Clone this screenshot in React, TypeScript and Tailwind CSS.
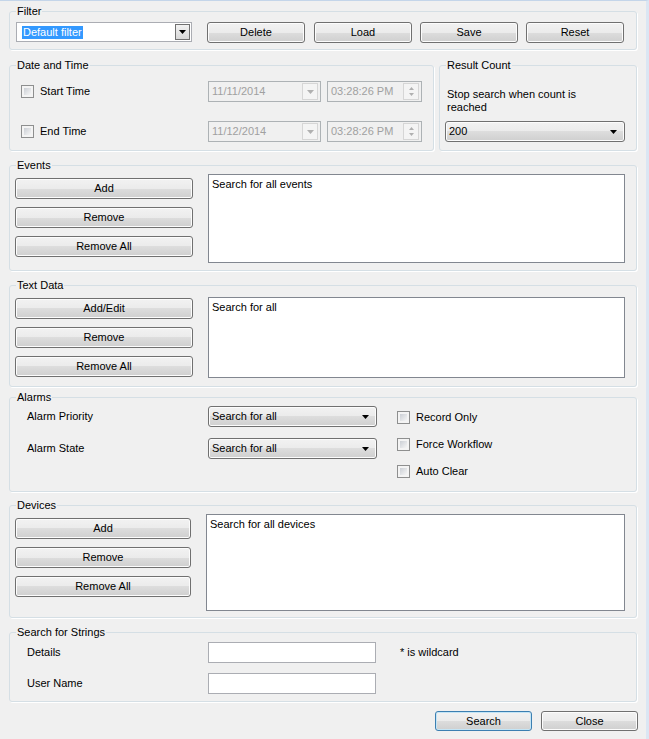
import React from "react";

const btnBase =
  "flex items-center justify-center rounded-[3px] border bg-[linear-gradient(#f2f2f2_0%,#ebebeb_50%,#dddddd_50%,#cfcfcf_100%)] text-[11px] leading-[13px] text-black";

function Btn({ label, className = "", focused = false }: { label: string; className?: string; focused?: boolean }) {
  return (
    <button
      type="button"
      className={`${btnBase} ${
        focused
          ? "border-[#3c7fb1] shadow-[inset_0_0_0_1px_#c4e5f6]"
          : "border-[#707070] shadow-[inset_0_0_0_1px_#fcfcfc]"
      } ${className}`}
    >
      {label}
    </button>
  );
}

function Arrow({ color = "#000000" }: { color?: string }) {
  return (
    <svg width="7" height="4" viewBox="0 0 7 4">
      <path d="M0 0h7L3.5 4z" fill={color} />
    </svg>
  );
}

function Check({ label }: { label: string }) {
  return (
    <div className="flex h-[13px] items-center">
      <div className="h-[13px] w-[13px] border border-[#8e8f8f] bg-[#f4f4f4] p-[2px]">
        <div className="h-full w-full bg-[linear-gradient(135deg,#cbcfd5,#f6f6f6)]" />
      </div>
      <span className="ml-[6px]">{label}</span>
    </div>
  );
}

function Group({ title, className = "", children }: { title: string; className?: string; children?: React.ReactNode }) {
  return (
    <div className={`relative rounded-[3px] border border-[#d5dfe5] shadow-[1px_1px_0_#ffffff] ${className}`}>
      <span className="absolute -top-[7px] left-[6px] bg-[#f0f0f0] px-[1px] leading-[13px]">{title}</span>
      {children}
    </div>
  );
}

function DropList({ value, className = "" }: { value: string; className?: string }) {
  return (
    <div
      className={`flex items-center justify-between rounded-[3px] border border-[#707070] bg-[linear-gradient(#f2f2f2_0%,#ebebeb_50%,#dddddd_50%,#cfcfcf_100%)] pl-[3px] pr-[7px] shadow-[inset_0_0_0_1px_#fcfcfc] ${className}`}
    >
      <span>{value}</span>
      <Arrow />
    </div>
  );
}

function ListBox({ text, className = "" }: { text: string; className?: string }) {
  return <div className={`border border-[#828790] bg-white pl-[3px] pt-[3px] ${className}`}>{text}</div>;
}

function DisabledPicker({ value, spin = false, className = "" }: { value: string; spin?: boolean; className?: string }) {
  return (
    <div className={`flex h-[21px] items-center justify-between border border-[#adb2b5] bg-[#f0f0f0] pl-[3px] pr-[2px] text-[#a0a0a0] ${className}`}>
      <span>{value}</span>
      {spin ? (
        <div className="flex h-[17px] w-[16px] flex-col items-center justify-center gap-[3px] border border-[#d6d6d6] bg-[#f4f4f4]">
          <svg width="5" height="3" viewBox="0 0 5 3">
            <path d="M0 3h5L2.5 0z" fill="#b0b0b0" />
          </svg>
          <svg width="5" height="3" viewBox="0 0 5 3">
            <path d="M0 0h5L2.5 3z" fill="#b0b0b0" />
          </svg>
        </div>
      ) : (
        <div className="flex h-[17px] w-[16px] items-center justify-center border border-[#d6d6d6] bg-[#f4f4f4]">
          <Arrow color="#b0b0b0" />
        </div>
      )}
    </div>
  );
}

function ButtonStack({ labels, width }: { labels: string[]; width: string }) {
  return (
    <div className={`flex flex-col gap-[8px] pt-[12px] ${width}`}>
      {labels.map((l) => (
        <Btn key={l} label={l} className="h-[21px] w-full" />
      ))}
    </div>
  );
}

export default function App() {
  return (
    <div className="h-[739px] w-[649px] overflow-hidden border-t border-r-[3px] border-t-[#c4d5e9] border-r-[#dbe6f3] bg-[#f0f0f0] pl-[9px] font-['Liberation_Sans',Arial,sans-serif] text-[11px] leading-[13px] text-black">
      {/* Filter */}
      <Group title="Filter" className="mt-[10px] h-[39px] w-[628px]">
        <div className="flex items-start pl-[6px] pt-[10px]">
          <div className="flex h-[20px] w-[176px] items-center justify-between border border-[#abadb3] bg-white pl-[5px] pr-[1px]">
            <span className="bg-[#3399ff] px-[1px] text-white">Default filter</span>
            <div className="flex h-[16px] w-[15px] items-center justify-center border border-[#707070] bg-[linear-gradient(#f2f2f2,#d8d8d8)]">
              <Arrow />
            </div>
          </div>
          <Btn label="Delete" className="ml-[15px] h-[21px] w-[98px]" />
          <Btn label="Load" className="ml-[9px] h-[21px] w-[98px]" />
          <Btn label="Save" className="ml-[8px] h-[21px] w-[98px]" />
          <Btn label="Reset" className="ml-[8px] h-[21px] w-[98px]" />
        </div>
      </Group>

      {/* Date and Time + Result Count */}
      <div className="mt-[15px] flex">
        <Group title="Date and Time" className="h-[86px] w-[425px]">
          <div className="flex flex-col gap-[19px] pl-[11px] pt-[15px]">
            <div className="flex h-[21px] items-center">
              <div className="w-[187px]">
                <Check label="Start Time" />
              </div>
              <DisabledPicker value="11/11/2014" className="w-[113px]" />
              <DisabledPicker value="03:28:26 PM" spin className="ml-[6px] w-[95px]" />
            </div>
            <div className="flex h-[21px] items-center">
              <div className="w-[187px]">
                <Check label="End Time" />
              </div>
              <DisabledPicker value="11/12/2014" className="w-[113px]" />
              <DisabledPicker value="03:28:26 PM" spin className="ml-[6px] w-[95px]" />
            </div>
          </div>
        </Group>
        <Group title="Result Count" className="ml-[5px] h-[86px] w-[198px]">
          <div className="pl-[5px] pt-[22px]">
            <p className="ml-[2px] w-[150px]">Stop search when count is reached</p>
            <DropList value="200" className="mt-[7px] h-[21px] w-[180px]" />
          </div>
        </Group>
      </div>

      {/* Events */}
      <Group title="Events" className="mt-[14px] h-[106px] w-[628px]">
        <div className="flex items-start pl-[5px]">
          <ButtonStack labels={["Add", "Remove", "Remove All"]} width="w-[178px]" />
          <ListBox text="Search for all events" className="ml-[15px] mt-[8px] h-[89px] w-[417px]" />
        </div>
      </Group>

      {/* Text Data */}
      <Group title="Text Data" className="mt-[14px] h-[102px] w-[628px]">
        <div className="flex items-start pl-[5px]">
          <ButtonStack labels={["Add/Edit", "Remove", "Remove All"]} width="w-[178px]" />
          <ListBox text="Search for all" className="ml-[15px] mt-[11px] h-[81px] w-[417px]" />
        </div>
      </Group>

      {/* Alarms */}
      <Group title="Alarms" className="mt-[10px] h-[95px] w-[628px]">
        <div className="flex items-start pl-[17px]">
          <div className="flex flex-col gap-[11px] pt-[8px]">
            <div className="flex h-[21px] items-center">
              <span className="w-[181px]">Alarm Priority</span>
              <DropList value="Search for all" className="h-[21px] w-[169px]" />
            </div>
            <div className="flex h-[21px] items-center">
              <span className="w-[181px]">Alarm State</span>
              <DropList value="Search for all" className="h-[21px] w-[169px]" />
            </div>
          </div>
          <div className="ml-[20px] flex flex-col gap-[14px] pt-[13px]">
            <Check label="Record Only" />
            <Check label="Force Workflow" />
            <Check label="Auto Clear" />
          </div>
        </div>
      </Group>

      {/* Devices */}
      <Group title="Devices" className="mt-[13px] h-[113px] w-[628px]">
        <div className="flex items-start pl-[5px]">
          <ButtonStack labels={["Add", "Remove", "Remove All"]} width="w-[176px]" />
          <ListBox text="Search for all devices" className="ml-[15px] mt-[8px] h-[97px] w-[419px]" />
        </div>
      </Group>

      {/* Search for Strings */}
      <Group title="Search for Strings" className="mt-[14px] h-[70px] w-[628px]">
        <div className="flex flex-col gap-[10px] pl-[17px] pt-[9px]">
          <div className="flex h-[21px] items-center">
            <span className="w-[181px]">Details</span>
            <div className="h-[21px] w-[168px] border border-[#abadb3] bg-white" />
            <span className="ml-[24px]">* is wildcard</span>
          </div>
          <div className="flex h-[21px] items-center">
            <span className="w-[181px]">User Name</span>
            <div className="h-[21px] w-[168px] border border-[#abadb3] bg-white" />
          </div>
        </div>
      </Group>

      {/* Footer buttons */}
      <div className="mt-[9px] flex w-[629px] justify-end gap-[9px]">
        <Btn label="Search" focused className="h-[20px] w-[97px]" />
        <Btn label="Close" className="h-[20px] w-[97px]" />
      </div>
    </div>
  );
}
